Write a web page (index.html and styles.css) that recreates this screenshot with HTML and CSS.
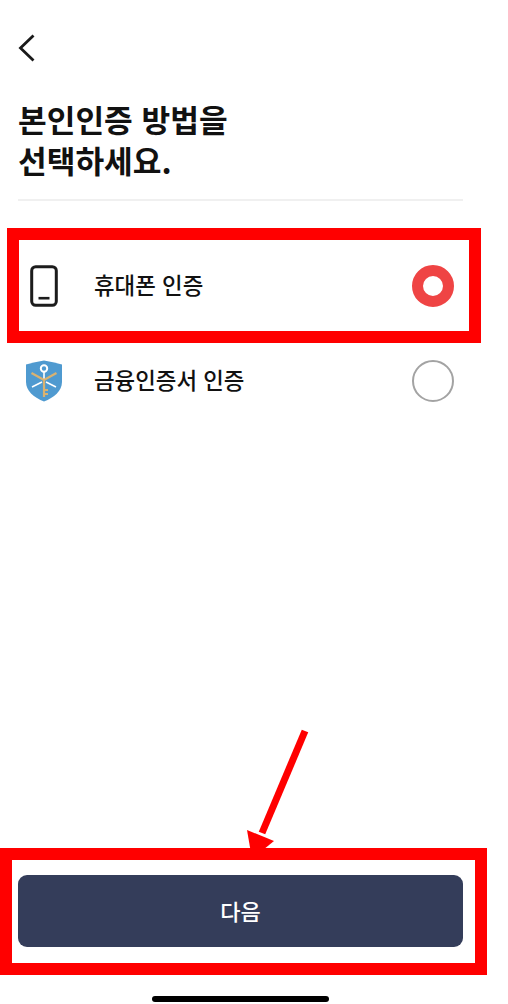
FILE: index.html
```html
<!DOCTYPE html>
<html lang="ko">
<head>
    <meta charset="UTF-8">
    <meta name="viewport" content="width=device-width, initial-scale=1.0">
    <title>본인인증 방법 선택</title>
    <link rel="stylesheet" href="styles.css">
</head>
<body>
    <div class="screen">
        <!-- Back button -->
        <button class="back-btn" aria-label="뒤로">
            <svg width="17" height="28" viewBox="0 0 17 28" fill="none">
                <path d="M15.5 1.5L2.5 14L15.5 26.5" stroke="#1a1a1a" stroke-width="2.8"/>
            </svg>
        </button>

        <h1 class="title">본인인증 방법을<br>선택하세요.</h1>
        <div class="divider"></div>

        <!-- Method list -->
        <div class="method-list">
            <div class="method-row">
                <div class="method-icon">
                    <svg width="28" height="42" viewBox="0 0 28 42" fill="none">
                        <rect x="1.7" y="1.7" width="24.6" height="38.6" rx="4" stroke="#1c1c1c" stroke-width="3"/>
                        <path d="M8.5 33.2H19.5" stroke="#1c1c1c" stroke-width="2.6"/>
                    </svg>
                </div>
                <div class="method-label">휴대폰 인증</div>
                <div class="radio radio-on"></div>
            </div>
            <div class="method-row">
                <div class="method-icon">
                    <svg width="38" height="42" viewBox="0 0 38 42" fill="none">
                        <path d="M1 4.5C7 3 13 1.5 19 0.5C25 1.5 31 3 37 4.5V22C37 31 29 37.5 19 41.5C9 37.5 1 31 1 22Z" fill="#4f9ad0"/>
                        <circle cx="19" cy="8.5" r="3.2" stroke="#fff" stroke-width="2"/>
                        <path d="M19 11.5V20M17 22L7 27M21 22L31 27" stroke="#fff" stroke-width="1.6"/>
                        <path d="M6.5 13L19 20L31.5 13M19 20V37M19 30H23M19 34H23" stroke="#d9b271" stroke-width="2.2"/>
                    </svg>
                </div>
                <div class="method-label">금융인증서 인증</div>
                <div class="radio"></div>
            </div>
        </div>

        <button class="next-btn">다음</button>
        <div class="home-bar"></div>

        <!-- Red annotations on top of the screenshot -->
        <div class="mark mark-method"></div>
        <div class="mark mark-next"></div>
        <svg class="mark-arrow" width="70" height="135" viewBox="0 0 70 135" fill="none">
            <path d="M64 6L21 108" stroke="#ff0000" stroke-width="7"/>
            <path d="M6 105L33 116L11 134Z" fill="#ff0000"/>
        </svg>
    </div>
</body>
</html>
```

FILE: styles.css
```css
* {
    margin: 0;
    padding: 0;
    box-sizing: border-box;
    font-family: "Noto Sans CJK KR", "Noto Sans", sans-serif;
}

body {
    background-color: #fff;
}

.screen {
    position: relative;
    display: flex;
    flex-direction: column;
    width: 508px;
    height: 1004px;
    padding: 34px 45px 2px 18px;
    overflow: hidden;
}

.back-btn {
    display: block;
    align-self: flex-start;
    height: 28px;
    background: none;
    border: none;
}

.title {
    margin-top: 36px;
    font-size: 31.2px;
    line-height: 41px;
    font-weight: 700;
    color: #111;
}

.divider {
    height: 2px;
    margin-top: 19px;
    background-color: #f0f0f0;
}

.method-list {
    display: flex;
    flex-direction: column;
    margin-top: 37px;
}

.method-row {
    display: flex;
    align-items: center;
    height: 95px;
    padding-left: 7px;
    padding-right: 9px;
}

.method-icon {
    display: flex;
    justify-content: center;
    width: 38px;
    margin-right: 31px;
}

.method-label {
    flex: 1;
    padding-bottom: 4px;
    font-size: 22.4px;
    font-weight: 500;
    color: #111;
}

.radio {
    width: 42px;
    height: 42px;
    border: 2px solid #a3a3a3;
    border-radius: 50%;
}

.radio-on {
    border: 11px solid #ef4444;
}

.next-btn {
    height: 72px;
    margin-top: auto;
    padding-bottom: 3px;
    background-color: #343d5a;
    border: none;
    border-radius: 9px;
    color: #fff;
    font-size: 22px;
    font-weight: 500;
}

.home-bar {
    align-self: center;
    width: 177px;
    height: 6px;
    margin-top: 49px;
    background-color: #000;
    border-radius: 3px;
}

.mark {
    position: absolute;
    border: 12px solid #ff0000;
    pointer-events: none;
}

.mark-method {
    left: 7px;
    top: 228px;
    width: 474px;
    height: 115px;
}

.mark-next {
    left: 0;
    top: 848px;
    width: 487px;
    height: 127px;
}

.mark-arrow {
    position: absolute;
    left: 241px;
    top: 725px;
}
```
